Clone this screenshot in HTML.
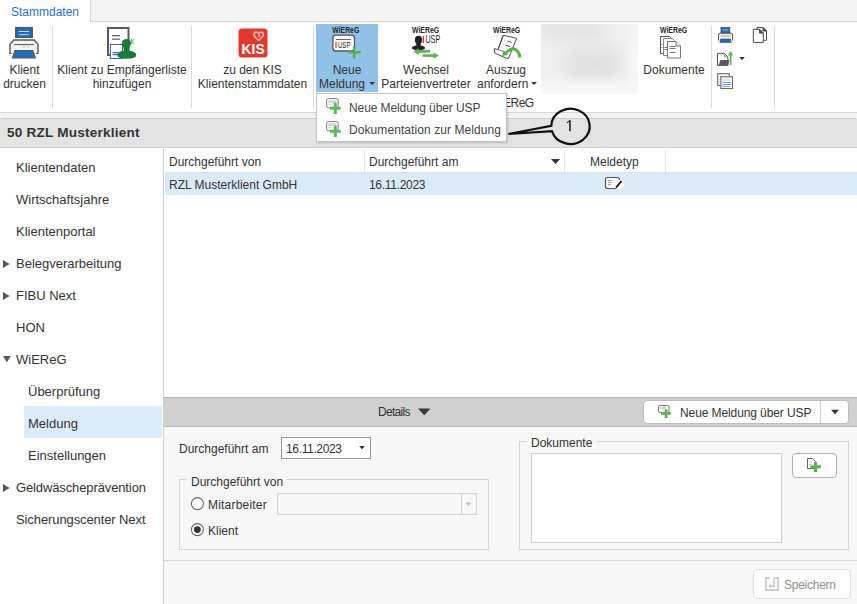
<!DOCTYPE html>
<html><head><meta charset="utf-8">
<style>
*{margin:0;padding:0;box-sizing:border-box}
html,body{width:857px;height:604px;overflow:hidden;background:#fff}
body{position:relative;font-family:"Liberation Sans",sans-serif;font-size:12px;color:#333}
.a{position:absolute}
.t{position:absolute;white-space:nowrap;line-height:14px}
.n{position:absolute;white-space:nowrap;font-size:13px;line-height:15px;color:#333}
.c{text-align:center}
.vs{position:absolute;width:1px;background:#dadada}
svg{position:absolute;overflow:visible}
</style></head><body>

<!-- tab bar -->
<div class="a" style="left:0;top:0;width:857px;height:22px;background:#f3f3f3;border-bottom:1px solid #d5d5d5"></div>
<div class="a" style="left:0;top:0;width:91px;height:22px;background:#fff;border-right:1px solid #d5d5d5"></div>
<div class="t" style="left:11px;top:5px;color:#1e73d2">Stammdaten</div>

<!-- ribbon -->
<div class="a" style="left:0;top:22px;width:857px;height:90px;background:#fff"></div>
<div class="a" style="left:0;top:112px;width:857px;height:1px;background:#d5d5d5"></div>
<div class="a" style="left:0;top:113px;width:857px;height:5px;background:#f3f3f3"></div>


<!-- client header -->
<div class="a" style="left:0;top:118px;width:857px;height:30px;background:#e3e3e3;border-top:1px solid #cdcdcd;border-bottom:1px solid #d2d2d2;border-radius:2px 2px 0 0"></div>
<div class="t" style="left:7px;top:125px;font-size:13.6px;line-height:16px;font-weight:bold;color:#333;letter-spacing:0.2px">50 RZL Musterklient</div>

<!-- left nav -->
<div class="a" style="left:163px;top:148px;width:1px;height:456px;background:#cfcfcf"></div>
<div class="a" style="left:24px;top:406px;width:138px;height:32px;background:#daecf8"></div>
<div class="n" style="left:16px;top:160px">Klientendaten</div>
<div class="n" style="left:16px;top:192px">Wirtschaftsjahre</div>
<div class="n" style="left:16px;top:224px">Klientenportal</div>
<div class="n" style="left:16px;top:256px">Belegverarbeitung</div>
<div class="n" style="left:16px;top:288px">FIBU Next</div>
<div class="n" style="left:16px;top:320px">HON</div>
<div class="n" style="left:16px;top:352px">WiEReG</div>
<div class="n" style="left:28px;top:384px">Überprüfung</div>
<div class="n" style="left:28px;top:416px">Meldung</div>
<div class="n" style="left:28px;top:448px">Einstellungen</div>
<div class="n" style="left:16px;top:480px;letter-spacing:-0.12px">Geldwäscheprävention</div>
<div class="n" style="left:16px;top:512px;letter-spacing:-0.1px">Sicherungscenter Next</div>
<svg style="left:0;top:0" width="20" height="604">
<path d="M3 260 L9.6 264 L3 268Z" fill="#5a5a5a"/>
<path d="M3 292 L9.6 296 L3 300Z" fill="#5a5a5a"/>
<path d="M3 484 L9.6 488 L3 492Z" fill="#5a5a5a"/>
<path d="M3 356 L10.8 356 L6.9 362.4Z" fill="#5a5a5a"/>
</svg>

<!-- grid -->
<div class="vs" style="left:364px;top:150px;height:22px;background:#e3e3e3"></div>
<div class="vs" style="left:564px;top:150px;height:22px;background:#e3e3e3"></div>
<div class="vs" style="left:665px;top:150px;height:22px;background:#e3e3e3"></div>
<div class="t" style="left:169px;top:155px">Durchgeführt von</div>
<div class="t" style="left:369px;top:155px">Durchgeführt am</div>
<div class="t" style="left:590px;top:155px">Meldetyp</div>
<svg style="left:0;top:0" width="857" height="604">
<path d="M551 159 L560 159 L555.5 164Z" fill="#333"/>
</svg>
<div class="a" style="left:165px;top:172px;width:692px;height:1px;background:#e2e2e2"></div>
<div class="a" style="left:165px;top:173px;width:692px;height:22px;background:#daebf8"></div>
<svg style="left:0;top:0" width="857" height="604"><rect x="605.5" y="177.5" width="14" height="11" rx="2" fill="#fff" stroke="#555" stroke-width="1.2"/><path d="M608 180.5 L612 180.5 M608 182.6 L611.5 182.6 M608 184.7 L611 184.7" stroke="#888" stroke-width="0.9"/><circle cx="619" cy="184.5" r="4.8" fill="#fff"/><path d="M616 187.5 L621.5 181.2" stroke="#111" stroke-width="1.8"/></svg>
<div class="t" style="left:169px;top:178px">RZL Musterklient GmbH</div>
<div class="t" style="left:369px;top:178px;letter-spacing:-0.3px">16.11.2023</div>

<!-- details bar -->
<div class="a" style="left:164px;top:397px;width:693px;height:30px;background:#d0d0d0;border-top:1px solid #b5b5b5;border-bottom:1px solid #b9b9b9"></div>
<div class="t" style="left:378px;top:405px;letter-spacing:-0.7px">Details</div>
<svg style="left:0;top:0" width="857" height="604">
<path d="M418 408.5 L430.5 408.5 L424.2 415.3Z" fill="#3a3a3a"/>
</svg>
<div class="a" style="left:643px;top:400px;width:206px;height:24px;background:#fff;border:1px solid #bdbdbd;border-radius:4px"></div>
<div class="a" style="left:820px;top:401px;width:1px;height:22px;background:#cfcfcf"></div>
<div class="t" style="left:680px;top:406px;letter-spacing:-0.1px">Neue Meldung über USP</div>
<svg style="left:0;top:0" width="857" height="604"><rect x="658.5" y="405.5" width="10.5" height="7" rx="1.5" fill="#fff" stroke="#777" stroke-width="1"/><rect x="660" y="407" width="6" height="2.2" fill="#ccc"/><path d="M666.1 409.2 L666.1 418 M661 413.4 L670.8 413.4" stroke="#5ab552" stroke-width="2.8"/></svg>
<svg style="left:0;top:0" width="857" height="604">
<path d="M831 409.8 L839 409.8 L835 414.2Z" fill="#333"/>
</svg>

<!-- form area -->
<div class="a" style="left:164px;top:427px;width:693px;height:177px;background:#f7f7f7"></div>
<div class="a" style="left:164px;top:560px;width:693px;height:1px;background:#d8d8d8"></div>
<div class="t" style="left:179px;top:442px">Durchgeführt am</div>
<div class="a" style="left:281px;top:437px;width:90px;height:22px;background:#fff;border:1px solid #999"></div>
<div class="t" style="left:286px;top:442px;letter-spacing:-0.35px">16.11.2023</div>
<svg style="left:0;top:0" width="857" height="604">
<path d="M359.1 446 L364.9 446 L362 449.2Z" fill="#333"/>
</svg>
<!-- group box Durchgefuehrt von -->
<div class="a" style="left:179px;top:479px;width:310px;height:71px;border:1px solid #d3d3d3"></div>
<div class="a" style="left:187px;top:474px;width:100px;height:12px;background:#f7f7f7"></div>
<div class="t" style="left:191px;top:475px">Durchgeführt von</div>
<svg style="left:0;top:0" width="857" height="604">
<circle cx="197.4" cy="503.6" r="6" fill="#fff" stroke="#666" stroke-width="1.1"/>
<circle cx="197.4" cy="529.6" r="6" fill="#fff" stroke="#666" stroke-width="1.1"/>
<circle cx="197.4" cy="529.6" r="3.4" fill="#333"/>
</svg>
<div class="t" style="left:208px;top:498px;letter-spacing:0.2px">Mitarbeiter</div>
<div class="t" style="left:208px;top:524px">Klient</div>
<div class="a" style="left:277px;top:493px;width:200px;height:22px;background:#f7f7f7;border:1px solid #d3d3d3"></div>
<div class="a" style="left:461px;top:494px;width:1px;height:20px;background:#d3d3d3"></div>
<svg style="left:0;top:0" width="857" height="604">
<path d="M465.5 502.5 L471.5 502.5 L468.5 506Z" fill="#bbb"/>
</svg>
<!-- group box Dokumente -->
<div class="a" style="left:519px;top:441px;width:330px;height:109px;border:1px solid #d3d3d3"></div>
<div class="a" style="left:527px;top:435px;width:70px;height:12px;background:#f7f7f7"></div>
<div class="t" style="left:531px;top:436px">Dokumente</div>
<div class="a" style="left:531px;top:453px;width:251px;height:90px;background:#fff;border:1px solid #cdcdcd"></div>
<div class="a" style="left:792px;top:453px;width:45px;height:25px;background:#fff;border:1px solid #b0b0b0;border-radius:4px"></div>
<svg style="left:0;top:0" width="857" height="604"><path d="M807.5 458.5 L812.5 458.5 L815.5 461.5 L815.5 468.5 L807.5 468.5Z" fill="#fff" stroke="#666" stroke-width="1"/><path d="M809 462 L812 462 M809 464.5 L811.5 464.5" stroke="#bbb" stroke-width="0.8"/><path d="M815.5 462 L815.5 472 M810.4 466.8 L820.9 466.8" stroke="#5cb050" stroke-width="3"/></svg>
<!-- save button -->
<div class="a" style="left:753px;top:569px;width:98px;height:30px;background:#fff;border:1px solid #dcdcdc;border-radius:4px"></div>
<div class="t" style="left:784px;top:578px;color:#8c8c8c;letter-spacing:-0.25px">Speichern</div>
<svg style="left:0;top:0" width="857" height="604"><path d="M769.5 578 L766 578 L766 590 L778 590 L778 578 L774 578" fill="none" stroke="#cfcfcf" stroke-width="2"/><path d="M774 578 L774 586 L770 586" fill="none" stroke="#cfcfcf" stroke-width="1.8"/><path d="M768 586 L771 583.5 L771 588.5Z" fill="#cfcfcf"/></svg>


<!-- ribbon separators -->
<div class="vs" style="left:52px;top:26px;height:82px"></div>
<div class="vs" style="left:191px;top:26px;height:82px"></div>
<div class="vs" style="left:313px;top:26px;height:82px"></div>
<div class="vs" style="left:711px;top:26px;height:82px"></div>
<div class="vs" style="left:774px;top:26px;height:82px"></div>
<!-- selected button bg -->
<div class="a" style="left:316px;top:24px;width:62px;height:68px;background:#91c1e7"></div>
<!-- blurred area -->
<div class="a" style="left:541px;top:24px;width:97px;height:70px;background:#f0f0f0;overflow:hidden">
  <div class="a" style="left:-5px;top:-8px;width:70px;height:25px;background:#e4e4e4;filter:blur(7px);border-radius:12px"></div>
  <div class="a" style="left:22px;top:22px;width:60px;height:36px;background:#e1e1e1;filter:blur(8px);border-radius:18px"></div>
  <div class="a" style="left:-10px;top:58px;width:120px;height:20px;background:#f7f7f7;filter:blur(5px)"></div>
  <div class="a" style="left:88px;top:0;width:20px;height:80px;background:#f6f6f6;filter:blur(5px)"></div>
</div>
<!-- ribbon labels -->
<div class="t c" style="left:0;top:63px;width:49px">Klient</div>
<div class="t c" style="left:0;top:77px;width:49px">drucken</div>
<div class="t c" style="left:52px;top:63px;width:140px">Klient zu Empfängerliste</div>
<div class="t c" style="left:52px;top:77px;width:140px">hinzufügen</div>
<div class="t c" style="left:192px;top:63px;width:121px">zu den KIS</div>
<div class="t c" style="left:192px;top:77px;width:121px">Klientenstammdaten</div>
<div class="t c" style="left:316px;top:63px;width:62px">Neue</div>
<div class="t" style="left:319px;top:77px">Meldung</div>
<div class="t c" style="left:380px;top:63px;width:92px">Wechsel</div>
<div class="t c" style="left:380px;top:77px;width:92px">Parteienvertreter</div>
<div class="t c" style="left:476px;top:63px;width:60px">Auszug</div>
<div class="t" style="left:477px;top:77px">anfordern</div>
<div class="t c" style="left:640px;top:63px;width:68px">Dokumente</div>
<div class="t" style="left:490px;top:96px;letter-spacing:-0.5px">WiEReG</div>
<svg style="left:0;top:0" width="857" height="120">
<path d="M369.3 82.1 L375.1 82.1 L372.2 85.1Z" fill="#333"/>
<path d="M531.1 82.1 L536.9 82.1 L534 85.1Z" fill="#333"/>
<path d="M739.2 57 L744.8 57 L742 60.2Z" fill="#333"/>
<g font-family="Liberation Sans" font-weight="bold" font-size="8.2" fill="#262626">
<text transform="translate(332.2 33) scale(0.84 1)">WiEReG</text>
<text transform="translate(412 33) scale(0.84 1)">WiEReG</text>
<text transform="translate(493 33) scale(0.84 1)">WiEReG</text>
<text transform="translate(660 33) scale(0.84 1)">WiEReG</text>
</g>
<!-- printer big -->
<g>
<rect x="15.7" y="27.6" width="16.6" height="9.8" fill="#1f6fc1" stroke="#555" stroke-width="1.3"/>
<rect x="18.8" y="31" width="10.2" height="0.9" fill="#e0ecf8"/>
<rect x="18.8" y="34.2" width="10.2" height="0.9" fill="#c5dbf2"/>
<path d="M10 53.5 L10 44 L14 40 L34 40 L38 44 L38 53.5" fill="#f2f2f2" stroke="#555" stroke-width="1.4"/>
<path d="M9.4 53.5 L11.8 53.5 M36.2 53.5 L38.6 53.5" stroke="#555" stroke-width="1.2"/>
<path d="M14 44.6 L34 44.6" stroke="#555" stroke-width="1"/>
<rect x="23.3" y="46.3" width="1.2" height="1.2" fill="#999"/><rect x="27.7" y="46.3" width="1.2" height="1.2" fill="#999"/>
<path d="M15 50.6 L32.8 50.6 L35.4 58 L12.4 58Z" fill="#1f6fc1" stroke="#555" stroke-width="1.1"/>
</g>
<!-- Empfaengerliste icon -->
<g>
<rect x="108" y="28" width="20.5" height="27" fill="#fff" stroke="#5a5a5a" stroke-width="2"/>
<rect x="112" y="35" width="8" height="1.3" fill="#666"/>
<rect x="112" y="38.5" width="8" height="1.3" fill="#666"/>
<rect x="110.5" y="44.5" width="12" height="14" fill="#fff" stroke="#3a66b8" stroke-width="1"/>
<rect x="112.5" y="52" width="6" height="1.2" fill="#3a66b8"/><rect x="112.5" y="54" width="6" height="1.2" fill="#3a66b8"/>
<ellipse cx="126.4" cy="43.3" rx="4.6" ry="4.4" fill="#1a7a3e"/>
<path d="M122.8 45 L130 45 L129 50.5 Q136.2 51.5 136.2 55 Q136.2 58.8 126.7 58.8 Q117.3 58.8 117.3 55 Q117.3 51.5 124 50.5Z" fill="#1a7a3e"/>
<path d="M131.5 39 L131.5 44 M131.5 41.5 L134.5 39 M131.5 41.5 L134.5 44" stroke="#3da35a" stroke-width="0.8" fill="none"/>
</g>
<!-- KIS -->
<g>
<rect x="238.5" y="28.5" width="29" height="29" rx="3.5" fill="#e3392d"/>
<text transform="translate(241.6 54) scale(0.92 1)" font-family="Liberation Sans" font-weight="bold" font-size="15" fill="#fff">KIS</text>
<path d="M258.6 40.6 L254.8 36.6 Q253.2 34.8 254.4 33 Q256.2 31 258.2 33 L259.2 34.6 Q260 36.4 258.4 37 M258.4 33.6 Q260.4 31.2 262.5 32.6 Q264.2 34.4 262.6 36.6 L258.6 40.6" fill="none" stroke="#f3b3ad" stroke-width="1.6"/>
</g>
<!-- Neue Meldung USP -->
<g>
<rect x="332.9" y="35.2" width="21.6" height="15.8" rx="3" fill="#fff" stroke="#555" stroke-width="1.3"/>
<rect x="336" y="39" width="15" height="0.9" fill="#555"/>
<rect x="335.3" y="41.9" width="1.4" height="6.3" fill="#e8534b"/>
<text transform="translate(337.9 48.3) scale(0.72 1)" font-family="Liberation Sans" font-size="8.6" fill="#222">USP</text>
<path d="M354.1 46.2 L354.1 58.4 M347.9 52.3 L360.8 52.3" stroke="#56b150" stroke-width="2.5"/>
</g>
<!-- Wechsel icon -->
<g>
<ellipse cx="418.5" cy="40" rx="3.6" ry="4.2" fill="#222"/>
<path d="M416 43.5 L421 43.5 L420.5 45.5 Q425 46 425 48 Q425 50 418.5 50 Q412 50 412 48 Q412 46 416.5 45.5Z" fill="#222"/>
<rect x="422.7" y="36" width="1.3" height="7" fill="#e0322a"/>
<text transform="translate(425.4 42.9) scale(0.72 1)" font-family="Liberation Sans" font-size="10" fill="#222">USP</text>
<path d="M430 51.2 L417 51.6" stroke="#5db553" stroke-width="2.7"/>
<path d="M413.3 51.5 L418.8 48 L418.8 55Z" fill="#5db553"/>
<path d="M422.6 55.5 L435 55.6" stroke="#5db553" stroke-width="2.7"/>
<path d="M439 55.6 L433.5 52.4 L433.5 58.8Z" fill="#5db553"/>
</g>
<!-- Auszug icon -->
<g fill="none" stroke="#3a3a3a" stroke-width="0.9">
<path d="M503.2 35.3 L516.7 38.3 L508.5 58.3 L505.8 58.1 L494.8 53 L494.3 48.6 L498.1 49.5 Z" fill="#fff"/>
<path d="M498.1 49.5 L503.2 35.3"/>
<path d="M498.1 49.5 Q504 51 506 53.5" stroke="#555" stroke-width="0.8"/>
</g>
<path d="M504.5 40.3 L505 40.5 M507.3 41.2 L511.5 42.4 M503.3 44.3 L503.8 44.5 M505.6 45.3 L510 46.5 M501.7 48 L502.2 48.2" stroke="#444" stroke-width="0.9" fill="none"/>
<path d="M505.5 53.5 Q511 47 515.5 49.5 Q519.5 52 519.8 57.5" fill="none" stroke="#58b04a" stroke-width="3"/>
<path d="M502.3 56.2 L503.2 50.3 L508.3 54.5Z" fill="#58b04a"/>
<!-- Dokumente icon -->
<g stroke-width="1">
<path d="M660.5 36.5 L669.5 36.5 L671.5 38.5 L671.5 53.5 L660.5 53.5Z" fill="#fff" stroke="#555"/>
<path d="M663.5 38.5 L672.5 38.5 L674.5 40.5 L674.5 55.5 L663.5 55.5Z" fill="#fff" stroke="#888"/>
<path d="M667.5 41.5 L676 41.5 L680.5 46 L680.5 58 L667.5 58Z" fill="#fff" stroke="#777"/>
<path d="M676 41.5 L676 46 L680.5 46" fill="#eee" stroke="#777"/>
<path d="M661.5 44.5 L662.5 44.5 M661.5 47.5 L662.5 47.5 M664.5 47.5 L667 47.5 M664.5 49.5 L667 49.5 M669.5 46.5 L675.5 46.5 M669.5 48.5 L675.5 48.5 M669.5 52.5 L675.5 52.5" stroke="#666" stroke-width="0.9"/>
</g>
<!-- small printer -->
<g>
<rect x="721" y="27.5" width="8.8" height="5.2" fill="#1f6fc1" stroke="#4a4a4a" stroke-width="0.8"/>
<rect x="722.5" y="29.5" width="6" height="0.9" fill="#9cc3ec"/>
<path d="M718.5 40.5 L718.5 35 Q718.5 33.3 720.3 33.3 L730.8 33.3 Q732.6 33.3 732.6 35 L732.6 40.5" fill="#f0f0f0" stroke="#555" stroke-width="1"/>
<path d="M720.5 36 L730.5 36" stroke="#999" stroke-width="0.8"/>
<path d="M720.5 39 L730.5 39 L731.2 42.5 L719.8 42.5Z" fill="#1f6fc1" stroke="#4a4a4a" stroke-width="0.6"/>
</g>
<!-- copy icon -->
<g fill="#fff" stroke="#4a4a4a" stroke-width="1">
<path d="M757 27.5 L763 27.5 L766.5 31 L766.5 40.3 L757 40.3Z"/>
<path d="M763 27.5 L766.5 31 L763 31Z" fill="#555"/>
<path d="M753.3 29.3 L759.5 29.3 L763.3 33.1 L763.3 42.4 L753.3 42.4Z"/>
<path d="M759.5 29.3 L763.3 33.1 L759.5 33.1Z" fill="#555"/>
</g>
<!-- folder export -->
<g>
<path d="M717.5 65.5 L717.5 53.3 L724.3 53.3 L727.8 56.8 L727.8 65.5Z" fill="#fff" stroke="#555" stroke-width="1"/>
<path d="M724.3 53.3 L724.3 56.8 L727.8 56.8" fill="none" stroke="#777" stroke-width="0.8"/>
<path d="M718.3 65.8 L720.5 60 L729.3 60 L728 65.8Z" fill="#5a5a5a"/>
<path d="M730.6 65 L730.6 54.5" stroke="#5bb850" stroke-width="1.8"/>
<path d="M727.9 55.5 L730.6 51 L733.3 55.5Z" fill="#5bb850"/>
</g>
<!-- doc lines icon -->
<g>
<rect x="717.7" y="73.7" width="11.6" height="11.7" fill="#fff" stroke="#6a6a6a" stroke-width="1.1"/>
<path d="M719.5 76.5 L725 76.5" stroke="#ccc" stroke-width="0.7"/>
<path d="M719.5 79.3 L721 79.3 M719.5 82 L721 82" stroke="#4a8ad4" stroke-width="0.9"/>
<rect x="720.9" y="76.8" width="11.6" height="11.7" fill="#fff" stroke="#6a6a6a" stroke-width="1.1"/>
<path d="M722.5 79.2 L730 79.2 M722.5 80.7 L731 80.7" stroke="#c8c8c8" stroke-width="0.7"/>
<path d="M722.3 82.5 L731.2 82.5 M722.3 84.5 L731.2 84.5 M722.3 86.4 L729.8 86.4" stroke="#5a95d6" stroke-width="0.9"/>
</g>
</svg>

<!-- dropdown menu -->
<div class="a" style="left:316px;top:93px;width:191px;height:49px;background:#fff;border:1px solid #c4c4c4;box-shadow:1px 1px 2px rgba(0,0,0,0.18)"></div>
<div class="t" style="left:349px;top:101px;color:#444;letter-spacing:-0.1px">Neue Meldung über USP</div>
<div class="t" style="left:349px;top:123px;color:#444;letter-spacing:0.08px">Dokumentation zur Meldung</div>
<svg style="left:0;top:0" width="857" height="604">
<g id="nmicon">
<rect x="326.6" y="98.6" width="11.6" height="9.2" rx="2" fill="#fff" stroke="#777" stroke-width="1"/>
<rect x="328.3" y="100.3" width="8" height="3" fill="#d4d4d4"/>
<rect x="328.3" y="104" width="4" height="1" fill="#ddd"/>
<path d="M335.3 102.8 L335.3 114 M330 108.3 L340.7 108.3" stroke="#5dba5d" stroke-width="3"/>
</g>
<use href="#nmicon" y="23"/>
<!-- callout -->
<path d="M551.3 125.9 A19.2 17.6 0 1 1 552 131.1 L508.4 134 Z" fill="none" stroke="#111" stroke-width="2.2" stroke-linejoin="miter" stroke-miterlimit="4"/>
<rect x="569.2" y="120.2" width="1.5" height="11" fill="#1a1a1a"/><path d="M566.9 122.9 L569.8 120.6" stroke="#1a1a1a" stroke-width="1.1" fill="none"/>
</svg>


</body></html>
